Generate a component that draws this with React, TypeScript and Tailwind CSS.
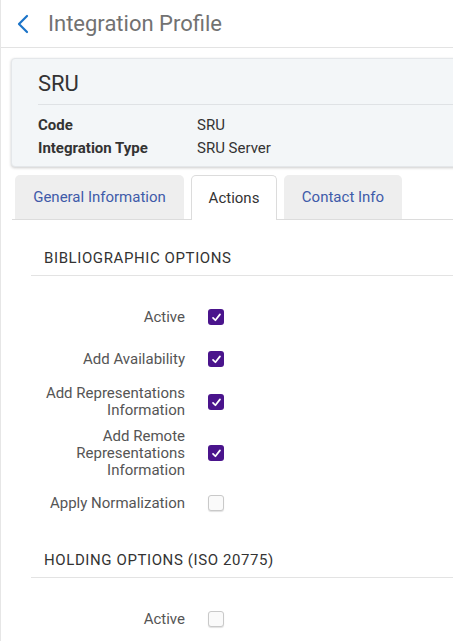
import React from 'react';

type Row = { label: string[]; checked: boolean; h: string };

const biblio: Row[] = [
  { label: ['Active'], checked: true, h: 'h-[42px]' },
  { label: ['Add Availability'], checked: true, h: 'h-[42px]' },
  { label: ['Add Representations', 'Information'], checked: true, h: 'h-[44px]' },
  { label: ['Add Remote', 'Representations', 'Information'], checked: true, h: 'h-[58px]' },
  { label: ['Apply Normalization'], checked: false, h: 'h-[42px]' },
];

const Checkbox = ({ checked }: { checked: boolean }) =>
  checked ? (
    <span className="flex h-4 w-4 items-center justify-center rounded-[3px] bg-[#4a148c]">
      <svg width="11" height="11" viewBox="0 0 12 12" fill="none">
        <path d="M2.2 6.4 4.8 9 9.8 2.6" stroke="white" strokeWidth="1.9" strokeLinecap="round" strokeLinejoin="round" />
      </svg>
    </span>
  ) : (
    <span className="block h-4 w-4 rounded-[3px] border border-[#c9c9c9] bg-[#fafafa] shadow-[0_1px_1px_rgba(0,0,0,0.12)]" />
  );

const OptionRow = ({ row }: { row: Row }) => (
  <div className={`flex items-center ${row.h}`}>
    <div className="w-[154px] text-right text-[15px] leading-[17px] text-[#555]">
      {row.label.map((l) => (
        <div key={l}>{l}</div>
      ))}
    </div>
    <div className="ml-[23px]">
      <Checkbox checked={row.checked} />
    </div>
  </div>
);

const SectionHeader = ({ title }: { title: string }) => (
  <div className="ml-[30px] border-b border-[#e3e3e3] pb-[8px] pl-[13px] text-[15px] leading-[17px] tracking-[0.6px] text-[#333]">
    {title}
  </div>
);

export default function App() {
  return (
    <div className="min-h-[641px] w-[453px] overflow-hidden border-l border-[#e6e6e6] bg-white font-['Roboto',sans-serif]">
      <div className="flex h-[48px] items-center border-b border-[#e3e3e3]">
        <svg className="ml-[15px]" width="14" height="20" viewBox="0 0 14 20" fill="none">
          <path d="M11 2 3 10l8 8" stroke="#1a73c8" strokeWidth="2.2" strokeLinecap="round" strokeLinejoin="round" />
        </svg>
        <span className="ml-[18px] text-[22px] leading-[26px] text-[#727272]">Integration Profile</span>
      </div>

      <div className="ml-[10px] mt-[10px] w-[460px] rounded-[4px] border border-[#e4e7ea] bg-[#f3f6f8] pl-[26px] pt-[12px] pb-[6px] shadow-[0_1px_3px_rgba(0,0,0,0.2)]">
        <div className="text-[22px] leading-[26px] text-[#333]">SRU</div>
        <div className="mt-[7px] border-t border-[#dfe2e5] pt-[9px] text-[15px] leading-[23px] text-[#333]">
          <div className="flex">
            <span className="w-[159px] font-bold">Code</span>
            <span>SRU</span>
          </div>
          <div className="flex">
            <span className="w-[159px] font-bold">Integration Type</span>
            <span>SRU Server</span>
          </div>
        </div>
      </div>

      <div className="ml-[11px] mt-[9px] flex h-[44px] items-end gap-[7px] border-b border-[#dcdcdc] pl-[3px]">
        <div className="flex h-[44px] w-[169px] items-center justify-center rounded-t-[5px] bg-[#eeeeee] text-[15px] text-[#3f5ba9]">
          General Information
        </div>
        <div className="-mb-px flex h-[45px] w-[86px] items-center justify-center rounded-t-[5px] border border-b-0 border-[#dcdcdc] bg-white text-[15px] text-[#333]">
          Actions
        </div>
        <div className="flex h-[44px] w-[118px] items-center justify-center rounded-t-[5px] bg-[#eeeeee] text-[15px] text-[#3f5ba9]">
          Contact Info
        </div>
      </div>

      <div className="pt-[30px]">
        <SectionHeader title="BIBLIOGRAPHIC OPTIONS" />
        <div className="ml-[30px] mt-[20px]">
          {biblio.map((r) => (
            <OptionRow key={r.label.join(' ')} row={r} />
          ))}
        </div>
      </div>

      <div className="pt-[28px]">
        <SectionHeader title="HOLDING OPTIONS (ISO 20775)" />
        <div className="ml-[30px] mt-[20px]">
          <OptionRow row={{ label: ['Active'], checked: false, h: 'h-[42px]' }} />
        </div>
      </div>
    </div>
  );
}
